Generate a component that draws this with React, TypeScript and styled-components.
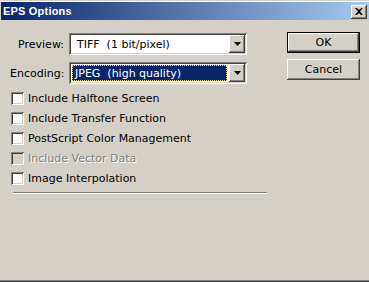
import styled, { createGlobalStyle } from 'styled-components'

const Global = createGlobalStyle`
  html, body { margin: 0; padding: 0; background: #d4d0c8; }
  body { font-family: "DejaVu Sans", Verdana, sans-serif; font-size: 11px; }
`

const raised = `
  box-shadow: inset -1px -1px 0 #404040, inset 1px 1px 0 #ffffff,
    inset -2px -2px 0 #808080, inset 2px 2px 0 #d4d0c8;
`
const sunken = `
  box-shadow: inset 1px 1px 0 #808080, inset -1px -1px 0 #ffffff,
    inset 2px 2px 0 #404040, inset -2px -2px 0 #d4d0c8;
`

const Window = styled.div`
  width: 369px;
  height: 282px;
  box-sizing: border-box;
  padding: 2px 0 0 1px;
  background: #d4d0c8;
  box-shadow: inset 0 -1px 0 #404040, inset 0 -2px 0 #808080, inset 0 1px 0 #d4d0c8,
    inset 0 2px 0 #ffffff;
  display: flex;
  flex-direction: column;
  color: #000;
`

const TitleBar = styled.div`
  height: 18px;
  display: flex;
  align-items: center;
  justify-content: space-between;
  padding: 0 2px 0 2px;
  background: linear-gradient(to right, #0a246a, #a6caf0);
`

const Title = styled.span`
  color: #fff;
  font-family: "Liberation Sans", Arial, sans-serif;
  font-weight: bold;
  font-size: 11px;
  letter-spacing: 0.2px;
`

const CloseButton = styled.div`
  width: 16px;
  height: 14px;
  margin-top: 1px;
  background: #d4d0c8;
  display: flex;
  align-items: center;
  justify-content: center;
  ${raised}
  svg { display: block; margin-top: -1px; }
`

const Body = styled.div`
  display: flex;
  padding: 12px 0 0 9px;
`

const Main = styled.div`
  display: flex;
  flex-direction: column;
  width: 268px;
`

const Fields = styled.div`
  display: grid;
  grid-template-columns: 54px 178px;
  column-gap: 5px;
  row-gap: 7px;
  margin-top: 1px;
  align-items: center;
`

const Label = styled.label`
  text-align: right;
`

const Combo = styled.div`
  height: 22px;
  box-sizing: border-box;
  padding: 2px;
  background: #fff;
  display: flex;
  ${sunken}
`

const ComboText = styled.div<{ $focused?: boolean }>`
  flex: 1;
  margin: 1px 2px 1px 1px;
  box-sizing: border-box;
  padding: 0 0 0 ${p => (p.$focused ? 2 : 4)}px;
  display: flex;
  align-items: center;
  white-space: pre;
  background: ${p => (p.$focused ? '#0a246a' : 'transparent')};
  color: ${p => (p.$focused ? '#fff' : '#000')};
  border: 1px dotted ${p => (p.$focused ? '#e8dc9a' : 'transparent')};
`

const DropButton = styled.div`
  width: 16px;
  background: #d4d0c8;
  display: flex;
  align-items: center;
  justify-content: center;
  ${raised}
`

const Checks = styled.div`
  display: flex;
  flex-direction: column;
  margin: 4px 0 0 1px;
`

const CheckRow = styled.div<{ $disabled?: boolean }>`
  height: 20px;
  display: flex;
  align-items: center;
  gap: 4px;
  color: ${p => (p.$disabled ? '#808080' : '#000')};
  text-shadow: ${p => (p.$disabled ? '1px 1px 0 #fff' : 'none')};
`

const Box = styled.span<{ $disabled?: boolean }>`
  width: 13px;
  height: 13px;
  box-sizing: border-box;
  background: ${p => (p.$disabled ? '#d4d0c8' : '#fff')};
  ${sunken}
`

const Separator = styled.div`
  width: 254px;
  height: 2px;
  margin: 4px 0 0 3px;
  border-top: 1px solid #808080;
  border-bottom: 1px solid #fff;
  box-sizing: border-box;
`

const Buttons = styled.div`
  display: flex;
  flex-direction: column;
  gap: 6px;
  margin-left: 9px;
`

const Button = styled.button<{ $default?: boolean }>`
  width: 73px;
  height: 21px;
  box-sizing: border-box;
  font-family: inherit;
  font-size: 11px;
  color: #000;
  background: #d4d0c8;
  border: ${p => (p.$default ? '1px solid #000' : 'none')};
  padding: 0;
  ${p =>
    p.$default
      ? `box-shadow: inset -1px -1px 0 #404040, inset 1px 1px 0 #ffffff, inset -2px -2px 0 #808080;`
      : raised}
`

const Arrow = () => (
  <svg width="7" height="4" viewBox="0 0 7 4">
    <path d="M0 0h7L3.5 4z" fill="#000" />
  </svg>
)

const options = [
  { label: 'Include Halftone Screen' },
  { label: 'Include Transfer Function' },
  { label: 'PostScript Color Management' },
  { label: 'Include Vector Data', disabled: true },
  { label: 'Image Interpolation' },
]

export default function App() {
  return (
    <>
      <Global />
      <Window>
        <TitleBar>
          <Title>EPS Options</Title>
          <CloseButton>
            <svg width="8" height="7" viewBox="0 0 8 7">
              <path d="M0 0h2l2 2 2-2h2L5 3.5 8 7H6L4 5 2 7H0l3-3.5z" fill="#000" />
            </svg>
          </CloseButton>
        </TitleBar>
        <Body>
          <Main>
            <Fields>
              <Label>Preview:</Label>
              <Combo>
                <ComboText>{'TIFF  (1 bit/pixel)'}</ComboText>
                <DropButton><Arrow /></DropButton>
              </Combo>
              <Label>Encoding:</Label>
              <Combo>
                <ComboText $focused>{'JPEG  (high quality)'}</ComboText>
                <DropButton><Arrow /></DropButton>
              </Combo>
            </Fields>
            <Checks>
              {options.map(o => (
                <CheckRow key={o.label} $disabled={o.disabled}>
                  <Box $disabled={o.disabled} />
                  {o.label}
                </CheckRow>
              ))}
            </Checks>
            <Separator />
          </Main>
          <Buttons>
            <Button $default>OK</Button>
            <Button>Cancel</Button>
          </Buttons>
        </Body>
      </Window>
    </>
  )
}
